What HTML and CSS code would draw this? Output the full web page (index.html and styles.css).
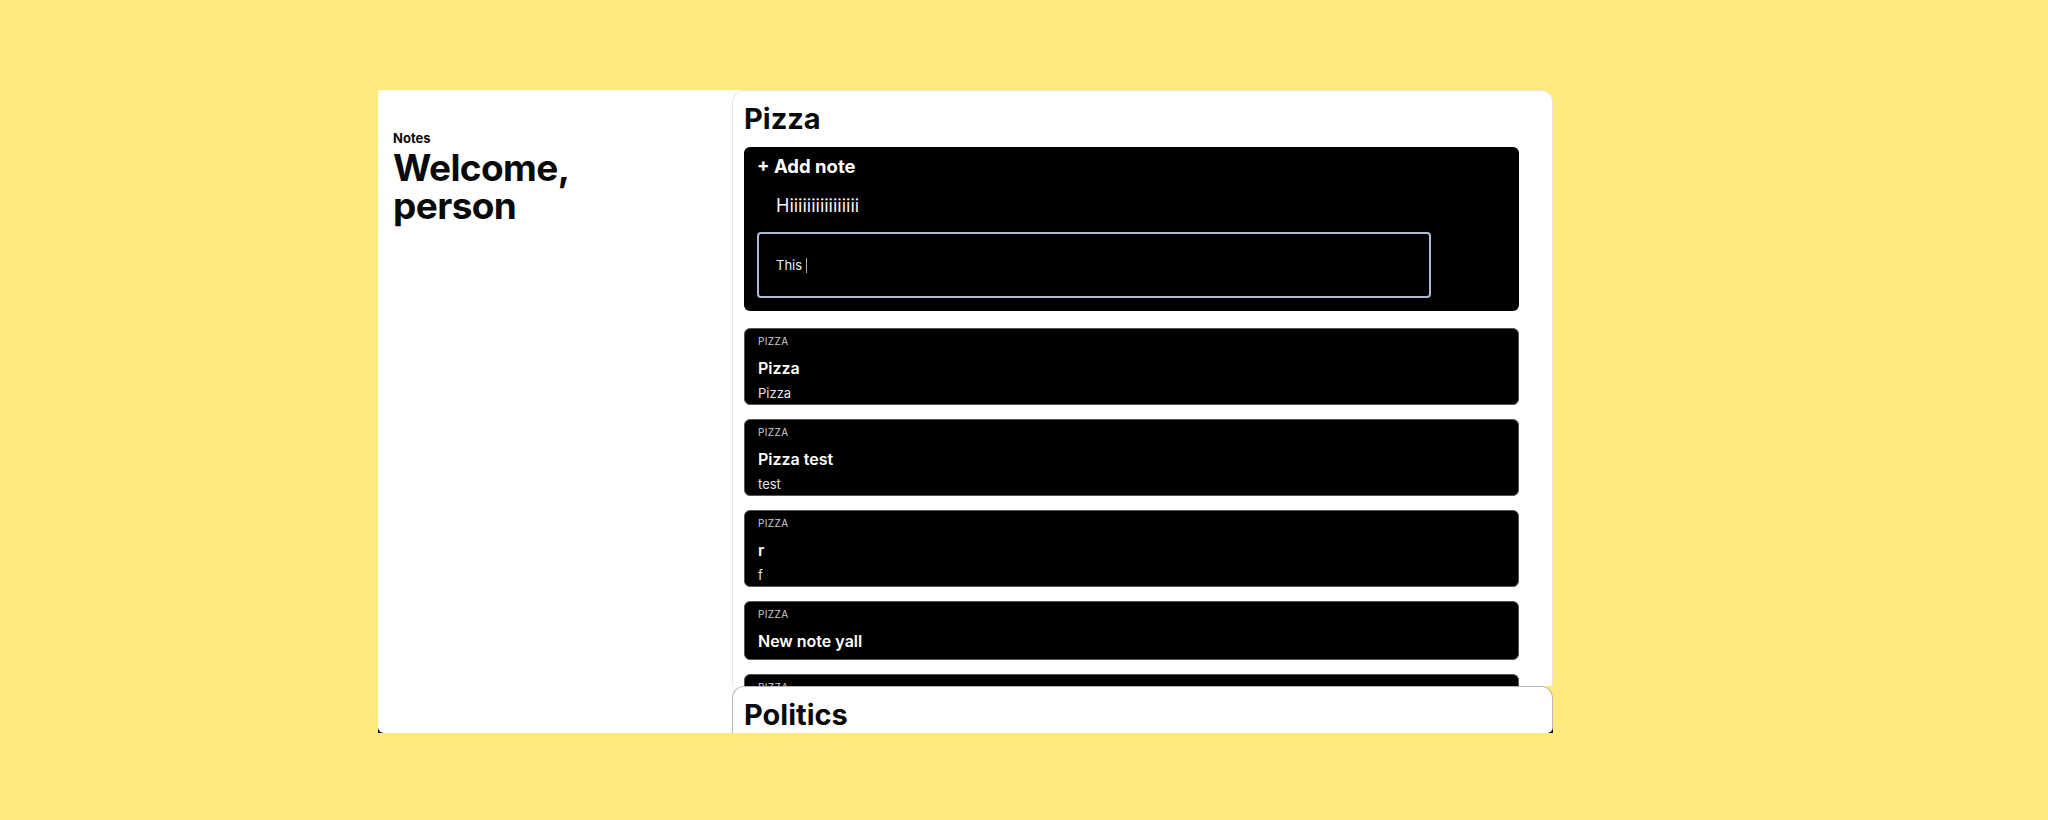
FILE: index.html
```html
<!DOCTYPE html>
<html lang="en">
<head>
  <meta charset="UTF-8">
  <meta name="viewport" content="width=device-width, initial-scale=1.0">
  <title>Notes</title>
  <link rel="stylesheet" href="styles.css">
</head>
<body>
  <div class="app">
    <aside class="sidebar">
      <p class="eyebrow">Notes</p>
      <h1 class="welcome">Welcome,<br>person</h1>
    </aside>

    <main class="topics">
      <section class="topic topic-open">
        <h2 class="topic-title">Pizza</h2>

        <div class="add-card">
          <h3 class="add-title">+ Add note</h3>
          <div class="draft-title">Hiiiiiiiiiiiiiiii</div>
          <div class="draft-body">This&nbsp;<span class="caret"></span></div>
        </div>

        <ul class="note-list">
          <li class="note">
            <p class="note-tag">Pizza</p>
            <h4 class="note-title">Pizza</h4>
            <p class="note-body">Pizza</p>
          </li>
          <li class="note">
            <p class="note-tag">Pizza</p>
            <h4 class="note-title">Pizza test</h4>
            <p class="note-body">test</p>
          </li>
          <li class="note">
            <p class="note-tag">Pizza</p>
            <h4 class="note-title">r</h4>
            <p class="note-body">f</p>
          </li>
          <li class="note">
            <p class="note-tag">Pizza</p>
            <h4 class="note-title">New note yall</h4>
          </li>
          <li class="note">
            <p class="note-tag">Pizza</p>
            <h4 class="note-title">Another one</h4>
            <p class="note-body">more</p>
          </li>
        </ul>
      </section>

      <section class="topic">
        <h2 class="topic-title">Politics</h2>
      </section>
    </main>
  </div>
</body>
</html>
```

FILE: styles.css
```css
body {
    margin: 0;
    background-color: #fee97f;
    font-family: "Inter", "Noto Sans", sans-serif;
    color: #0a0a0a;
}

.app {
    display: flex;
    width: 1175px;
    height: 643px;
    margin: 90px 0 0 378px;
    overflow: hidden;
    /* black only peeks out behind the rounded bottom corners */
    background: linear-gradient(to bottom, transparent calc(100% - 10px), #000 calc(100% - 10px));
}

.sidebar {
    width: 354px;
    flex-shrink: 0;
    box-sizing: border-box;
    padding: 40px 15px;
    background-color: #fff;
    border-bottom-left-radius: 6px;
}

.eyebrow {
    margin: 0 0 3px;
    font-size: 13px;
    font-weight: 700;
}

.welcome {
    margin: 0;
    font-size: 37px;
    line-height: 38px;
    font-weight: 700;
    letter-spacing: -0.6px;
}

.topics {
    flex: 1;
    display: flex;
    flex-direction: column;
    overflow: hidden;
    border-bottom-right-radius: 6px;
    /* sidebar white continues behind the left rounded corners */
    background: linear-gradient(to right, #fff 14px, transparent 14px);
}

.topic {
    flex: 1;
    box-sizing: border-box;
    padding: 10px 33px 0 11px;
    background-color: #fff;
    border: 1px solid #b8b8b8;
    border-bottom: none;
    border-radius: 12px 12px 0 0;
}

.topic-open {
    flex: none;
    height: 596px;
    overflow: hidden;
    border-color: #e6e6e6;
}

.topic-title {
    margin: 0 0 11px;
    font-size: 29px;
    font-weight: 700;
}

.add-card {
    background-color: #000;
    color: #fff;
    border-radius: 6px;
    padding: 8px 13px 13px;
    margin-bottom: 17px;
}

.add-title {
    margin: 0 0 18px;
    font-size: 18.5px;
    font-weight: 700;
}

.draft-title {
    padding-left: 19px;
    margin-bottom: 16px;
    font-size: 18px;
    color: #f2f2f2;
}

.draft-body {
    display: flex;
    align-items: center;
    box-sizing: border-box;
    width: 674px;
    height: 66px;
    padding: 0 17px;
    border: 2px solid #aebbd6;
    border-radius: 4px;
    font-size: 13px;
    color: #eee;
}

.caret {
    display: inline-block;
    width: 1px;
    height: 15px;
    background-color: #aaa;
}

.note-list {
    list-style: none;
    margin: 0;
    padding: 0;
    display: flex;
    flex-direction: column;
    gap: 14px;
}

.note {
    background-color: #000;
    color: #fff;
    border: 1px solid #555;
    border-radius: 6px;
    padding: 5px 13px 2px;
}

.note-tag {
    margin: 0;
    font-size: 10px;
    line-height: 14px;
    letter-spacing: 0.4px;
    text-transform: uppercase;
    color: #cfcfcf;
}

.note-title {
    margin: 9px 0 5px;
    font-size: 16px;
    line-height: 22px;
    font-weight: 600;
}

.note-body {
    margin: 0;
    font-size: 13px;
    line-height: 18px;
    color: #e6e6e6;
}
```
